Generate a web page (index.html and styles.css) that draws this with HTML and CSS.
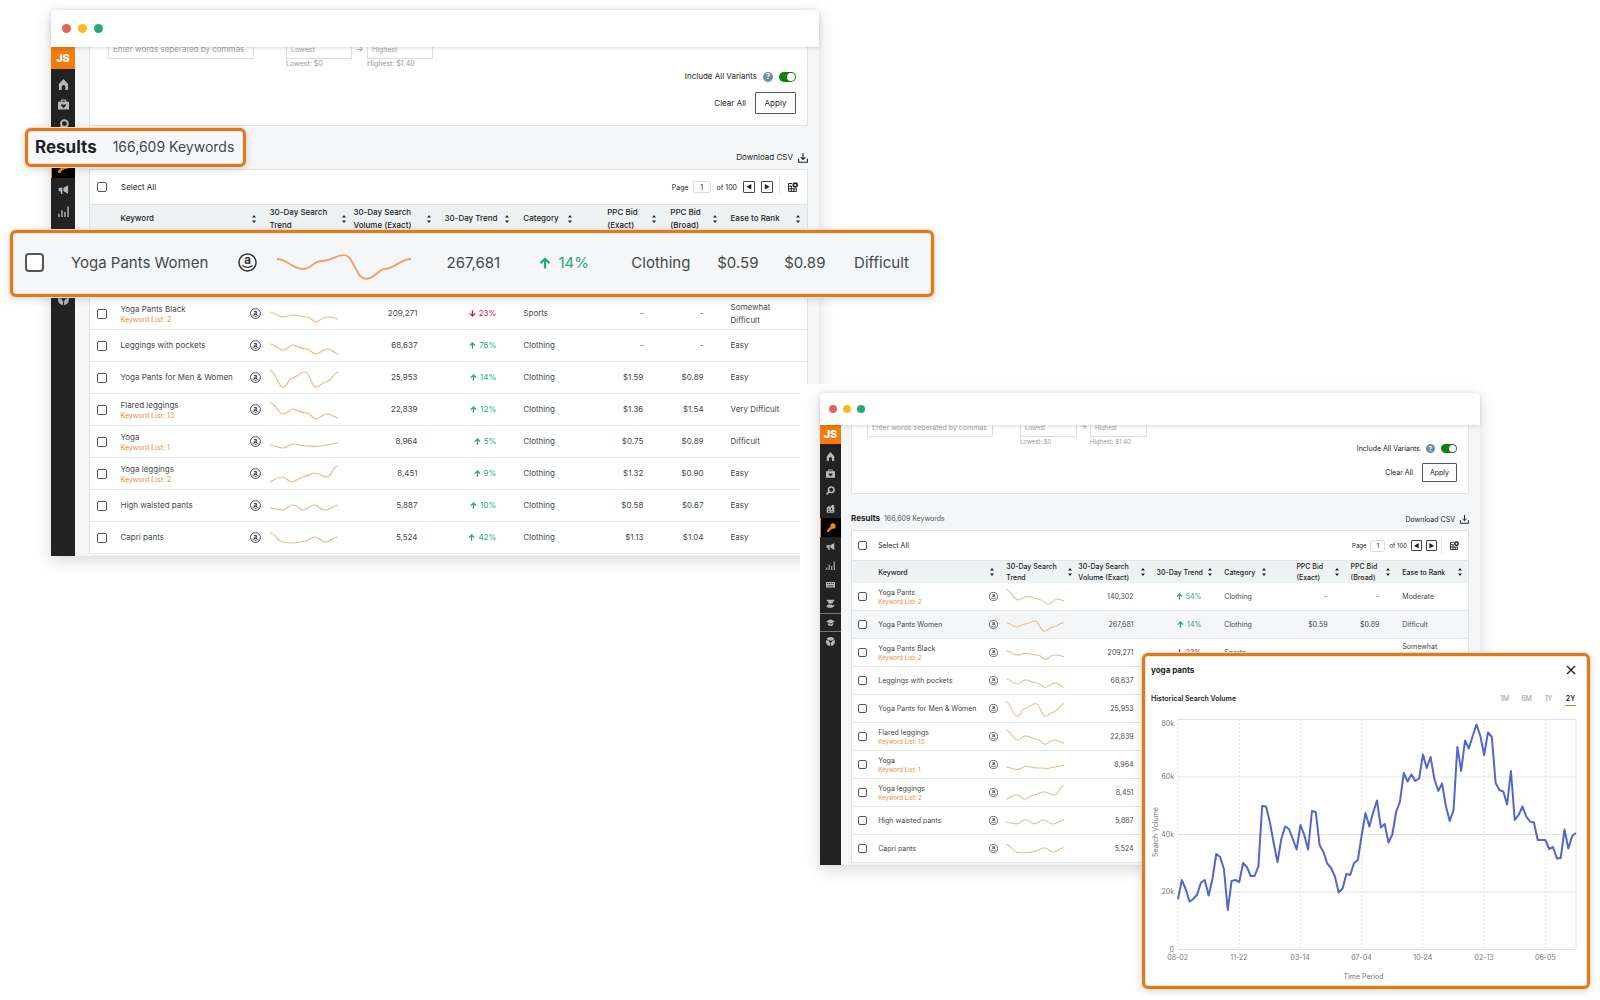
FILE: index.html
```html
<!DOCTYPE html>
<html lang="en">
<head>
<meta charset="utf-8">
<meta name="viewport" content="width=device-width, initial-scale=1">
<title>Keyword Scout</title>
<link rel="stylesheet" href="styles.css">
</head>
<body>
<svg class="defs" aria-hidden="true">
  <symbol id="home" viewBox="0 0 12 12"><path fill="currentColor" d="M6 0 11 5.500V11q0 1-1 1H8V8.500a2 2 0 0 0-4 0V12H2q-1 0-1-1V5.500z"/></symbol>
  <symbol id="case" viewBox="0 0 12 12"><path fill="currentColor" fill-rule="evenodd" d="M3 3V1.500Q3 .5 4 .5h4q1 0 1 1V3h3v8.500H0V3zM4.300 3h3.400V1.800H4.300zM3.500 5.500v1.800L6 10l2.500-2.700V5.500L6 6.300z"/></symbol>
  <symbol id="search" viewBox="0 0 12 12"><circle cx="7" cy="5" r="3.700" fill="none" stroke="currentColor" stroke-width="2.200"/><path d="M4.300 7.500.8 11.200" stroke="currentColor" stroke-width="2.200" fill="none"/></symbol>
  <symbol id="store" viewBox="0 0 12 12"><path fill="currentColor" fill-rule="evenodd" d="M1 4.500 4 2.500l1.500 1L9 1l2 1v9.500H1zM3 6v1.500h1.500V6zm3.500-1v3H8V5zM3 9v1.500h2V9zm4 .5v1h2v-1z"/></symbol>
  <symbol id="key" viewBox="0 0 12 12"><path fill="currentColor" d="M7.500.3a3.800 3.800 0 0 1 4 4.200C11.300 7 9.300 8 7 7.500L5.800 8.700H4.500V10H3.200v1.300L2.300 12H0V9.800L4.500 5C4 2.500 5 .6 7.500.3z"/></symbol>
  <symbol id="mega" viewBox="0 0 12 12"><path fill="currentColor" d="M1 4h4v3.800H4.500l.6 3H3.300l-.7-3H1q-1-1.900 0-3.800zM6 4 11 1.300v9.400L6 7.800z"/></symbol>
  <symbol id="bars" viewBox="0 0 12 12"><path d="M1 12V8.500M4.300 12V4.500M7.600 12V6.500M11 12V.5" stroke="currentColor" stroke-width="1.500"/></symbol>
  <symbol id="board" viewBox="0 0 12 12"><path fill="currentColor" fill-rule="evenodd" d="M0 2.500h12v7.500H0zM1.500 4v1.200H3V4zm2.700 0v1.200h1.500V4zM7 4v1.200h1.300V4zm2.500 0v1.200h1.200V4zM2 7.200v1h8v-1z"/></symbol>
  <symbol id="supply" viewBox="0 0 12 12"><path fill="currentColor" d="M1 1h10v2H9.500L8.500 6h-5L2.500 3H1zM1 9q2.500-3 5-1.500h2.500q1 1-1 1.500L11 8q1 1-2 3-4 1.800-8-.3z"/></symbol>
  <symbol id="cap" viewBox="0 0 12 12"><path fill="currentColor" d="M6 1.500 12 4.500 6 7.500 0 4.500zM2.500 6.800 6 8.600l3.500-1.800v2.500Q6 11.800 2.500 9.300z"/></symbol>
  <symbol id="wheel" viewBox="0 0 12 12"><circle cx="6" cy="6" r="6" fill="currentColor"/><path d="M3.300 4.500h5.400L6 9z" fill="#222"/><path d="M0 3.300 3.300 4.500M8.700 4.500 12 3.300M6 9v3" stroke="#222" stroke-width="1.200" fill="none"/></symbol>
  <symbol id="amazon" viewBox="0 0 20 20"><circle cx="10" cy="10" r="9" fill="none" stroke="currentColor" stroke-width="1.600"/><text class="amazon-a" x="10" y="12" text-anchor="middle">a</text><path d="M4.500 13.200q5.500 3.800 11 0" fill="none" stroke="currentColor" stroke-width="1.400"/></symbol>
  <symbol id="sort" viewBox="0 0 4 8"><path fill="currentColor" d="M2 0 4 2.600H0zM0 5.400h4L2 8z"/></symbol>
  <symbol id="up" viewBox="0 0 12 12"><path d="M6 11.500V2M1.500 6.300 6 1.700l4.500 4.600" fill="none" stroke="currentColor" stroke-width="2.200"/></symbol>
  <symbol id="down" viewBox="0 0 12 12"><path d="M6 .5V10M1.500 5.700 6 10.300l4.500-4.600" fill="none" stroke="currentColor" stroke-width="2.200"/></symbol>
  <symbol id="download" viewBox="0 0 12 12"><path d="M6 0v7.500M3.300 5 6 7.700 8.700 5M.7 7v4h10.600V7" fill="none" stroke="currentColor" stroke-width="1.300"/></symbol>
  <symbol id="columns" viewBox="0 0 12 12"><path d="M5 1.800H.7v9.500H10V8M.7 5H5M.7 8.200H10M4 5v6M7 8v3.300" fill="none" stroke="currentColor" stroke-width="1.200"/><circle cx="8.700" cy="3.700" r="2.300" fill="none" stroke="currentColor" stroke-width="2"/></symbol>
  <symbol id="s-pants" viewBox="0 0 68 20"><path d="M0 2C6 2 9 14 14 14S19 10 24 10S33 12 38 13S46 19 50 19S56 13 60 13S65 15 68 15"/></symbol>
  <symbol id="s-women" viewBox="0 0 68 20"><path d="M0 8C5 8 8 13 13 13S18 9 23 9S29 6 34 6S40 18 45 18S51 13 55 13S63 8 68 8"/></symbol>
  <symbol id="s-black" viewBox="0 0 68 20"><path d="M0 8C5 8 8 13 13 13S18 11 23 11S32 13 37 13S42 18 46 18S51 13 57 13S64 14 68 15"/></symbol>
  <symbol id="s-pockets" viewBox="0 0 68 20"><path d="M0 8C5 8 8 14 13 14S19 9 23 9S31 13 36 13S42 18 46 18S52 13 57 13S64 17 68 18"/></symbol>
  <symbol id="s-men" viewBox="0 0 68 20"><path d="M0 2C6 4 8 19 13 19S18 10 22 10S30 4 35 4S41 19 46 19S52 14 56 14S64 5 68 4"/></symbol>
  <symbol id="s-flared" viewBox="0 0 68 20"><path d="M0 3C6 3 8 14 13 14S19 9 23 9S31 13 36 13S42 19 46 19S52 14 57 14S64 17 68 18"/></symbol>
  <symbol id="s-yoga" viewBox="0 0 68 20"><path d="M0 13C5 13 8 16 13 16S19 12 23 12S31 14 36 14S46 15 52 14S64 12 68 11"/></symbol>
  <symbol id="s-leggings" viewBox="0 0 68 20"><path d="M0 18C5 16 7 13 12 13S18 18 22 18S28 14 33 13S41 9 45 9S52 13 57 13S62 2 68 2"/></symbol>
  <symbol id="s-high" viewBox="0 0 68 20"><path d="M0 12C5 12 7 14 12 14S18 9 23 9S29 14 33 14S40 9 44 9S50 14 55 14S63 10 68 9"/></symbol>
  <symbol id="s-capri" viewBox="0 0 68 20"><path d="M0 5C5 5 7 13 12 14S19 15 23 15S30 14 35 13S41 9 45 9S51 14 56 14S63 9 68 9"/></symbol>
</svg>

<main class="stage">

  <section class="window window-large" aria-label="Keyword results">
    <header class="titlebar"><i class="dot red"></i><i class="dot yellow"></i><i class="dot green"></i></header>
    <div class="app">
      <nav class="sidebar" aria-label="Tools">
        <a class="logo" href="#">JS</a>
        <a class="tight" href="#" aria-label="Home"><svg><use href="#home"/></svg></a>
        <a class="tight" href="#" aria-label="Products"><svg><use href="#case"/></svg></a>
        <a class="tight" href="#" aria-label="Search"><svg><use href="#search"/></svg></a>
        <a href="#" aria-label="Store"><svg><use href="#store"/></svg></a>
        <a class="active" href="#" aria-label="Keywords"><svg><use href="#key"/></svg></a>
        <a href="#" aria-label="Marketing"><svg><use href="#mega"/></svg></a>
        <a href="#" aria-label="Analytics"><svg><use href="#bars"/></svg></a>
        <a href="#" aria-label="Inventory"><svg><use href="#board"/></svg></a>
        <a href="#" aria-label="Suppliers"><svg><use href="#supply"/></svg></a>
        <a class="ruled" href="#" aria-label="Academy"><svg><use href="#cap"/></svg></a>
        <a href="#" aria-label="Extension"><svg><use href="#wheel"/></svg></a>
      </nav>
      <div class="content">
        <form class="filters">
          <div class="fields">
            <input class="words" type="text" placeholder="Enter words seperated by commas" aria-label="Words">
            <label class="bound"><input type="text" placeholder="Lowest">Lowest: $0</label>
            <span class="to">→</span>
            <label class="bound"><input type="text" placeholder="Highest">Highest: $1.40</label>
          </div>
          <div class="actions">
            <label class="variants">Include All Variants <span class="help">?</span><input class="toggle" type="checkbox" checked></label>
            <div class="buttons"><button class="clear" type="reset">Clear All</button><button class="apply" type="button">Apply</button></div>
          </div>
        </form>
        <div class="summary">
          <a class="csv" href="#">Download CSV <svg><use href="#download"/></svg></a>
        </div>
        <div class="card">
          <div class="toolbar">
            <label class="select-all"><input class="box" type="checkbox">Select All</label>
            <div class="pager">
              <label>Page <input type="text" value="1"></label><span class="of">of 100</span>
              <button type="button" aria-label="Previous page">◀</button><button type="button" aria-label="Next page">▶</button>
              <a class="cols" href="#" aria-label="Columns"><svg><use href="#columns"/></svg></a>
            </div>
          </div>
          <table>
            <colgroup><col class="c-check"><col class="c-key"><col class="c-site"><col class="c-spark"><col class="c-vol"><col class="c-trend"><col class="c-cat"><col class="c-exact"><col class="c-broad"><col></colgroup>
            <thead><tr>
              <td></td>
              <th colspan="2"><div class="head">Keyword<svg><use href="#sort"/></svg></div></th>
              <th><div class="head near">30-Day Search<br>Trend<svg><use href="#sort"/></svg></div></th>
              <th><div class="head">30-Day Search<br>Volume (Exact)<svg><use href="#sort"/></svg></div></th>
              <th><div class="head">30-Day Trend<svg><use href="#sort"/></svg></div></th>
              <th><div class="head far">Category<svg><use href="#sort"/></svg></div></th>
              <th><div class="head">PPC Bid<br>(Exact)<svg><use href="#sort"/></svg></div></th>
              <th><div class="head">PPC Bid<br>(Broad)<svg><use href="#sort"/></svg></div></th>
              <th><div class="head near">Ease to Rank<svg><use href="#sort"/></svg></div></th>
            </tr></thead>
            <tbody>
              <tr class="covered"><td colspan="10"></td></tr>
              <tr><td><input class="box" type="checkbox" aria-label="Yoga Pants Black"></td><td>Yoga Pants Black<a class="list" href="#">Keyword List: 2</a></td><td><svg class="site"><use href="#amazon"/></svg></td><td><svg class="spark"><use href="#s-black"/></svg></td><td class="num">209,271</td><td class="num down"><svg><use href="#down"/></svg>23%</td><td>Sports</td><td class="num">-</td><td class="num">-</td><td>Somewhat<br>Difficult</td></tr>
              <tr><td><input class="box" type="checkbox" aria-label="Leggings with pockets"></td><td>Leggings with pockets</td><td><svg class="site"><use href="#amazon"/></svg></td><td><svg class="spark"><use href="#s-pockets"/></svg></td><td class="num">68,637</td><td class="num up"><svg><use href="#up"/></svg>76%</td><td>Clothing</td><td class="num">-</td><td class="num">-</td><td>Easy</td></tr>
              <tr><td><input class="box" type="checkbox" aria-label="Yoga Pants for Men and Women"></td><td>Yoga Pants for Men &amp; Women</td><td><svg class="site"><use href="#amazon"/></svg></td><td><svg class="spark"><use href="#s-men"/></svg></td><td class="num">25,953</td><td class="num up"><svg><use href="#up"/></svg>14%</td><td>Clothing</td><td class="num">$1.59</td><td class="num">$0.89</td><td>Easy</td></tr>
              <tr><td><input class="box" type="checkbox" aria-label="Flared leggings"></td><td>Flared leggings<a class="list" href="#">Keyword List: 13</a></td><td><svg class="site"><use href="#amazon"/></svg></td><td><svg class="spark"><use href="#s-flared"/></svg></td><td class="num">22,839</td><td class="num up"><svg><use href="#up"/></svg>12%</td><td>Clothing</td><td class="num">$1.36</td><td class="num">$1.54</td><td>Very Difficult</td></tr>
              <tr><td><input class="box" type="checkbox" aria-label="Yoga"></td><td>Yoga<a class="list" href="#">Keyword List: 1</a></td><td><svg class="site"><use href="#amazon"/></svg></td><td><svg class="spark"><use href="#s-yoga"/></svg></td><td class="num">8,964</td><td class="num up"><svg><use href="#up"/></svg>5%</td><td>Clothing</td><td class="num">$0.75</td><td class="num">$0.89</td><td>Difficult</td></tr>
              <tr><td><input class="box" type="checkbox" aria-label="Yoga leggings"></td><td>Yoga leggings<a class="list" href="#">Keyword List: 2</a></td><td><svg class="site"><use href="#amazon"/></svg></td><td><svg class="spark"><use href="#s-leggings"/></svg></td><td class="num">8,451</td><td class="num up"><svg><use href="#up"/></svg>9%</td><td>Clothing</td><td class="num">$1.32</td><td class="num">$0.90</td><td>Easy</td></tr>
              <tr><td><input class="box" type="checkbox" aria-label="High waisted pants"></td><td>High waisted pants</td><td><svg class="site"><use href="#amazon"/></svg></td><td><svg class="spark"><use href="#s-high"/></svg></td><td class="num">5,887</td><td class="num up"><svg><use href="#up"/></svg>10%</td><td>Clothing</td><td class="num">$0.58</td><td class="num">$0.67</td><td>Easy</td></tr>
              <tr><td><input class="box" type="checkbox" aria-label="Capri pants"></td><td>Capri pants</td><td><svg class="site"><use href="#amazon"/></svg></td><td><svg class="spark"><use href="#s-capri"/></svg></td><td class="num">5,524</td><td class="num up"><svg><use href="#up"/></svg>42%</td><td>Clothing</td><td class="num">$1.13</td><td class="num">$1.04</td><td>Easy</td></tr>
            </tbody>
          </table>
        </div>
      </div>
    </div>
  </section>

  <div class="callout results"><h2>Results</h2><span>166,609 Keywords</span></div>

  <div class="callout highlight">
    <input class="box" type="checkbox" aria-label="Yoga Pants Women">
    <span>Yoga Pants Women</span>
    <svg class="site"><use href="#amazon"/></svg>
    <svg class="spark"><use href="#s-women"/></svg>
    <span>267,681</span>
    <span class="up"><svg><use href="#up"/></svg>14%</span>
    <span>Clothing</span>
    <span>$0.59</span>
    <span>$0.89</span>
    <span>Difficult</span>
  </div>

  <div class="inset">
    <section class="window window-small" aria-label="Keyword results with history">
      <header class="titlebar"><i class="dot red"></i><i class="dot yellow"></i><i class="dot green"></i></header>
      <div class="app">
        <nav class="sidebar" aria-label="Tools">
          <a class="logo" href="#">JS</a>
          <a class="tight" href="#" aria-label="Home"><svg><use href="#home"/></svg></a>
          <a class="tight" href="#" aria-label="Products"><svg><use href="#case"/></svg></a>
          <a class="tight" href="#" aria-label="Search"><svg><use href="#search"/></svg></a>
          <a href="#" aria-label="Store"><svg><use href="#store"/></svg></a>
          <a class="active" href="#" aria-label="Keywords"><svg><use href="#key"/></svg></a>
          <a href="#" aria-label="Marketing"><svg><use href="#mega"/></svg></a>
          <a href="#" aria-label="Analytics"><svg><use href="#bars"/></svg></a>
          <a href="#" aria-label="Inventory"><svg><use href="#board"/></svg></a>
          <a href="#" aria-label="Suppliers"><svg><use href="#supply"/></svg></a>
          <a class="ruled" href="#" aria-label="Academy"><svg><use href="#cap"/></svg></a>
          <a href="#" aria-label="Extension"><svg><use href="#wheel"/></svg></a>
        </nav>
        <div class="content">
          <form class="filters">
            <div class="fields">
              <input class="words" type="text" placeholder="Enter words seperated by commas" aria-label="Words">
              <label class="bound"><input type="text" placeholder="Lowest">Lowest: $0</label>
              <span class="to">→</span>
              <label class="bound"><input type="text" placeholder="Highest">Highest: $1.40</label>
            </div>
            <div class="actions">
              <label class="variants">Include All Variants <span class="help">?</span><input class="toggle" type="checkbox" checked></label>
              <div class="buttons"><button class="clear" type="reset">Clear All</button><button class="apply" type="button">Apply</button></div>
            </div>
          </form>
          <div class="summary">
            <p class="count"><strong>Results</strong> 166,609 Keywords</p>
            <a class="csv" href="#">Download CSV <svg><use href="#download"/></svg></a>
          </div>
          <div class="card">
            <div class="toolbar">
              <label class="select-all"><input class="box" type="checkbox">Select All</label>
              <div class="pager">
                <label>Page <input type="text" value="1"></label><span class="of">of 100</span>
                <button type="button" aria-label="Previous page">◀</button><button type="button" aria-label="Next page">▶</button>
                <a class="cols" href="#" aria-label="Columns"><svg><use href="#columns"/></svg></a>
              </div>
            </div>
            <table>
              <colgroup><col class="c-check"><col class="c-key"><col class="c-site"><col class="c-spark"><col class="c-vol"><col class="c-trend"><col class="c-cat"><col class="c-exact"><col class="c-broad"><col></colgroup>
              <thead><tr>
                <td></td>
                <th colspan="2"><div class="head">Keyword<svg><use href="#sort"/></svg></div></th>
                <th><div class="head near">30-Day Search<br>Trend<svg><use href="#sort"/></svg></div></th>
                <th><div class="head">30-Day Search<br>Volume (Exact)<svg><use href="#sort"/></svg></div></th>
                <th><div class="head">30-Day Trend<svg><use href="#sort"/></svg></div></th>
                <th><div class="head far">Category<svg><use href="#sort"/></svg></div></th>
                <th><div class="head">PPC Bid<br>(Exact)<svg><use href="#sort"/></svg></div></th>
                <th><div class="head">PPC Bid<br>(Broad)<svg><use href="#sort"/></svg></div></th>
                <th><div class="head near">Ease to Rank<svg><use href="#sort"/></svg></div></th>
              </tr></thead>
              <tbody>
                <tr><td><input class="box" type="checkbox" aria-label="Yoga Pants"></td><td>Yoga Pants<a class="list" href="#">Keyword List: 2</a></td><td><svg class="site"><use href="#amazon"/></svg></td><td><svg class="spark"><use href="#s-pants"/></svg></td><td class="num">140,302</td><td class="num up"><svg><use href="#up"/></svg>54%</td><td>Clothing</td><td class="num">-</td><td class="num">-</td><td>Moderate</td></tr>
                <tr class="tinted"><td><input class="box" type="checkbox" aria-label="Yoga Pants Women"></td><td>Yoga Pants Women</td><td><svg class="site"><use href="#amazon"/></svg></td><td><svg class="spark"><use href="#s-women"/></svg></td><td class="num">267,681</td><td class="num up"><svg><use href="#up"/></svg>14%</td><td>Clothing</td><td class="num">$0.59</td><td class="num">$0.89</td><td>Difficult</td></tr>
                <tr><td><input class="box" type="checkbox" aria-label="Yoga Pants Black"></td><td>Yoga Pants Black<a class="list" href="#">Keyword List: 2</a></td><td><svg class="site"><use href="#amazon"/></svg></td><td><svg class="spark"><use href="#s-black"/></svg></td><td class="num">209,271</td><td class="num down"><svg><use href="#down"/></svg>23%</td><td>Sports</td><td></td><td></td><td class="cut">Somewhat</td></tr>
                <tr><td><input class="box" type="checkbox" aria-label="Leggings with pockets"></td><td>Leggings with pockets</td><td><svg class="site"><use href="#amazon"/></svg></td><td><svg class="spark"><use href="#s-pockets"/></svg></td><td class="num">68,637</td><td colspan="5"></td></tr>
                <tr><td><input class="box" type="checkbox" aria-label="Yoga Pants for Men and Women"></td><td>Yoga Pants for Men &amp; Women</td><td><svg class="site"><use href="#amazon"/></svg></td><td><svg class="spark"><use href="#s-men"/></svg></td><td class="num">25,953</td><td colspan="5"></td></tr>
                <tr><td><input class="box" type="checkbox" aria-label="Flared leggings"></td><td>Flared leggings<a class="list" href="#">Keyword List: 13</a></td><td><svg class="site"><use href="#amazon"/></svg></td><td><svg class="spark"><use href="#s-flared"/></svg></td><td class="num">22,839</td><td colspan="5"></td></tr>
                <tr><td><input class="box" type="checkbox" aria-label="Yoga"></td><td>Yoga<a class="list" href="#">Keyword List: 1</a></td><td><svg class="site"><use href="#amazon"/></svg></td><td><svg class="spark"><use href="#s-yoga"/></svg></td><td class="num">8,964</td><td colspan="5"></td></tr>
                <tr><td><input class="box" type="checkbox" aria-label="Yoga leggings"></td><td>Yoga leggings<a class="list" href="#">Keyword List: 2</a></td><td><svg class="site"><use href="#amazon"/></svg></td><td><svg class="spark"><use href="#s-leggings"/></svg></td><td class="num">8,451</td><td colspan="5"></td></tr>
                <tr><td><input class="box" type="checkbox" aria-label="High waisted pants"></td><td>High waisted pants</td><td><svg class="site"><use href="#amazon"/></svg></td><td><svg class="spark"><use href="#s-high"/></svg></td><td class="num">5,887</td><td colspan="5"></td></tr>
                <tr><td><input class="box" type="checkbox" aria-label="Capri pants"></td><td>Capri pants</td><td><svg class="site"><use href="#amazon"/></svg></td><td><svg class="spark"><use href="#s-capri"/></svg></td><td class="num">5,524</td><td colspan="5"></td></tr>
              </tbody>
            </table>
          </div>
        </div>
      </div>
    </section>
  </div>

  <section class="callout history" aria-label="Historical search volume">
    <header class="history-top"><h2>yoga pants</h2><button type="button" aria-label="Close"><svg viewBox="0 0 10 10"><path d="M1 1l8 8M9 1 1 9" stroke="currentColor" stroke-width="1.400"/></svg></button></header>
    <div class="history-bar">
      <h3>Historical Search Volume</h3>
      <div class="ranges"><button type="button">1M</button><button type="button">6M</button><button type="button">1Y</button><button class="on" type="button">2Y</button></div>
    </div>
    <div class="chart">
      <span class="y-title">Search Volume</span>
      <div class="y-axis"><span>80k</span><span>60k</span><span>40k</span><span>20k</span><span>0</span></div>
      <svg class="plot" viewBox="0 0 104 231" preserveAspectRatio="none" role="img" aria-label="Search volume over two years">
        <path class="grid" d="M0 .5H104M0 58H104M0 115.500H104M0 173H104M0 230.500H104M104 0V231"/>
        <path class="grid dashed" d="M0 0V231M16 0V231M32 0V231M48 0V231M64 0V231M80 0V231M96 0V231"/>
        <polyline class="series" points="0,180 1,161 2,170 3,182.500 4,180 5,175.500 6,163.500 7,161 8,176.500 9,160 10,135 11,138 12,150 13,191 14,162 15,161 16,163 17,144 18,148 19,157 20,157 21,147.500 22,87 23,87.500 24,103 25,124 26,143 27,120 28,107.500 29,110 30,120 31,130.500 32,106 33,116 34,130.500 35,92 36,93 37,126 38,133 39,144.500 40,149 41,157.500 42,173.500 43,169.500 44,155 45,156 46,144 47,141 48,116 49,94 50,107.500 51,93.500 52,81.500 53,108.500 54,105 55,123.500 56,115.500 57,93 58,82.500 59,54 60,62.500 61,55.500 62,62 63,59.500 64,35.500 65,49 66,38 67,60 68,72 69,64.500 70,87 71,102 72,91 73,28 74,52 75,21.500 76,29.500 77,17 78,5.500 79,17 80,36 81,13.500 82,18 83,64 84,71 85,72.500 86,85.500 87,52 88,101 89,96 90,87.500 91,97.500 92,102.500 93,103.500 94,121 95,121 96,121 97,130 98,128 99,139.500 100,139 101,110.500 102,129.500 103,117 104,114"/>
      </svg>
      <div class="x-axis"><span>08-02</span><span>11-22</span><span>03-14</span><span>07-04</span><span>10-24</span><span>02-13</span><span>06-05</span></div>
      <span class="x-title">Time Period</span>
    </div>
  </section>
</main>
</body>
</html>
```
FILE: styles.css
```css
* { box-sizing: border-box; }
body { margin: 0; background: #fff; color: #44484b; font-family: Inter, "Liberation Sans", sans-serif; }
h2, h3, p { margin: 0; }
a { color: inherit; text-decoration: none; }
input, button { font: inherit; color: inherit; margin: 0; padding: 0; border: 0; background: none; }
svg { display: block; overflow: visible; }
.defs { position: absolute; width: 0; height: 0; }
.amazon-a { font: bold 12px Inter, sans-serif; fill: currentColor; }

.stage { position: relative; min-height: 1000px; overflow: hidden; }

/* Windows: the two sizes share all rules and differ in these values */
.window-large {
  --text: 8px; --small: 7px; --line: 13px; --title-h: 37px; --dot: 9px; --dot-gap: 7px; --title-pad: 11px;
  --side: 24px; --logo-h: 22px; --nav: 22px; --nav-tight: 20px; --nav-gap: 5px; --nav-icon: 11px;
  --gutter: 14px; --filter-h: 79px; --summary-h: 43px; --toolbar-h: 35px; --head-h: 28px; --row-h: 32px;
  --box: 10px; --spark-w: 68px; --spark-h: 20px; --site: 11px; --pad: 14px; --num-pad: 27px; --near: 7px; --far: 35px;
  --words: 146px; --bound: 66px; --apply-w: 41px; --apply-h: 22px; --field-pad: 18px; --field-gap: 32px; --to: 15px;
  --edge: 7px; --select-gap: 14px; --page: 18px; --page-gap: 6px;
}
.window-small {
  --text: 7px; --small: 6px; --line: 11px; --title-h: 32px; --dot: 8px; --dot-gap: 6px; --title-pad: 9px;
  --side: 21px; --logo-h: 19px; --nav: 19px; --nav-tight: 17px; --nav-gap: 4px; --nav-icon: 9px;
  --gutter: 10px; --filter-h: 69px; --summary-h: 36px; --toolbar-h: 30px; --head-h: 23px; --row-h: 28px;
  --box: 9px; --spark-w: 58px; --spark-h: 17px; --site: 9px; --pad: 12px; --num-pad: 23px; --near: 6px; --far: 30px;
  --words: 126px; --bound: 57px; --apply-w: 35px; --apply-h: 19px; --field-pad: 15px; --field-gap: 27px; --to: 13px;
  --edge: 6px; --select-gap: 11px; --page: 15px; --page-gap: 4px;
}
.window { background: #f4f6f8; border-radius: 4px 4px 0 0; box-shadow: 0 4px 16px rgba(0, 0, 0, .16); font-size: var(--text); line-height: var(--line); }
.window-large { position: absolute; left: 51px; top: 10px; width: 48vw; }
.inset { position: absolute; left: 50%; right: 0; top: 384px; bottom: 0; padding: 9px 0 0 20px; background: #fff; }
.window-small { width: 41.250vw; }

.titlebar { position: relative; display: flex; align-items: center; gap: var(--dot-gap); height: var(--title-h); padding-left: var(--title-pad); background: #fff; border-radius: 4px 4px 0 0; box-shadow: 0 1px 4px rgba(0, 0, 0, .15); }
.dot { width: var(--dot); height: var(--dot); border-radius: 50%; }
.red { background: #e2645f; }
.yellow { background: #f5bd1f; }
.green { background: #27a87c; }

.app { display: flex; }
.sidebar { display: flex; flex-direction: column; flex: none; width: var(--side); background: #222; color: #b4b8ba; }
.sidebar a { display: flex; align-items: center; justify-content: center; height: var(--nav); }
.sidebar svg { width: var(--nav-icon); height: var(--nav-icon); }
.sidebar .logo { height: var(--logo-h); margin-bottom: var(--nav-gap); background: #f57c0a; color: #fff; font-size: 11px; font-weight: 800; }
.sidebar .tight { height: var(--nav-tight); }
.sidebar .active { background: #000; color: #f58220; border-left: 1px solid #f58220; }
.sidebar .ruled { border-top: 1px solid #777; border-bottom: 1px solid #777; }

.content { flex: 1; min-width: 0; padding: 0 11px 2px var(--gutter); overflow: hidden; }
.filters { display: flex; justify-content: space-between; height: var(--filter-h); background: #fff; border: 1px solid #e0e4e6; border-top: 0; }
.fields { display: flex; align-items: flex-start; margin-top: -8px; padding-left: var(--field-pad); color: #999; }
.fields input { height: 20px; padding: 0 4px; border: 1px solid #dcdfe1; }
.fields input::placeholder { color: #a4a4a4; opacity: 1; }
.words { width: var(--words); margin-right: var(--field-gap); }
.bound { display: flex; flex-direction: column; width: var(--bound); font-size: var(--small); line-height: 9px; white-space: nowrap; }
.bound input { width: 100%; }
.to { width: var(--to); line-height: 20px; text-align: center; }
.actions { display: flex; flex-direction: column; align-items: flex-end; justify-content: flex-end; gap: 9px; padding: 0 11px 11px 0; color: #222; }
.variants { display: flex; align-items: center; gap: 6px; }
.help { width: var(--box); height: var(--box); border-radius: 50%; background: #6f8fa0; color: #fff; font-size: var(--small); line-height: var(--box); text-align: center; font-weight: 700; }
.toggle { appearance: none; display: flex; justify-content: flex-end; width: calc(var(--box) + 7px); height: var(--box); padding: 1px; border-radius: 5px; background: #128012; }
.toggle::before { content: ""; height: 100%; aspect-ratio: 1; border-radius: 50%; background: #fff; }
.buttons { display: flex; align-items: center; gap: 9px; }
.apply { width: var(--apply-w); height: var(--apply-h); border: 1px solid #555; border-radius: 1px; }

.summary { display: flex; align-items: flex-end; height: var(--summary-h); padding-bottom: 5px; color: #222; }
.count { color: #555; padding-bottom: 1px; }
.count strong { margin-right: 2px; font-size: 8px; color: #222; }
.csv { display: flex; align-items: center; gap: 5px; margin-left: auto; }
.csv svg, .cols svg { width: var(--box); height: var(--box); }

.card { background: #fff; border: 1px solid #dfe3e6; border-width: 1px 1px 0; }
.toolbar { display: flex; align-items: center; justify-content: space-between; height: calc(var(--toolbar-h) - 1px); padding: 0 9px 0 var(--edge); color: #222; }
.select-all { display: flex; align-items: center; gap: var(--select-gap); }
.pager { display: flex; align-items: center; gap: var(--page-gap); font-size: var(--small); }
.pager label { display: flex; align-items: center; gap: 4px; }
.pager input { width: var(--page); height: 12px; border: 1px solid #dcdfe1; border-radius: 2px; text-align: center; }
.pager button { width: calc(var(--box) + 2px); height: calc(var(--box) + 2px); border: 1px solid #444; border-radius: 1px; font-size: 6px; line-height: 8px; }
.cols { padding: 4px 0 4px 8px; border-left: 1px solid #e4e7e9; }
.box { appearance: none; display: block; flex: none; width: var(--box); height: var(--box); border: 1px solid #555; border-radius: 2px; background: #fff; }

table { width: 100%; table-layout: fixed; border-spacing: 0; }
.c-check { width: 4.250%; }
.c-key { width: 18%; }
.c-site { width: 2.800%; }
.c-spark { width: 11.700%; }
.c-vol { width: 12.700%; }
.c-trend { width: 11%; }
.c-cat { width: 11.700%; }
.c-exact { width: 8.800%; }
.c-broad { width: 8.400%; }
th, td { padding: 0; text-align: left; white-space: nowrap; font-weight: 400; }
thead tr { height: var(--head-h); background: #eef2f3; color: #222; }
thead td, thead th { border-top: 1px solid #e0e5e7; }
.head { position: relative; padding-right: var(--pad); font-weight: 500; }
.head svg { position: absolute; right: var(--pad); top: 50%; width: 4px; height: 8px; margin-top: -4px; }
.head.near svg { right: var(--near); }
.head.far svg { right: var(--far); }
tbody tr { height: var(--row-h); }
tbody td { border-bottom: 1px solid #e3e7ea; }
tbody td:first-child { padding-left: var(--edge); }
tbody .covered { height: 66px; }
.tinted { background: #f4f6f8; }
.list { display: block; font-size: var(--small); line-height: 8px; color: #e8913a; }
.site { width: var(--site); height: var(--site); color: #333; }
.spark { width: var(--spark-w); height: var(--spark-h); fill: none; stroke: #ecb98b; stroke-width: 1.200px; }
.num { padding-right: var(--num-pad); text-align: right; }
.num svg { display: inline-block; width: 7px; height: 7px; margin-right: 3px; vertical-align: -1px; }
.up { color: #27a87c; }
.down { color: #d0213f; }
.cut { padding-bottom: 12px; }

/* Enlarged details laid over the windows */
.callout { position: absolute; border: 3px solid #d97b24; border-radius: 6px; background: #f6f8f9; box-shadow: 0 0 0 1px #f9dcbc, 0 2px 8px rgba(0, 0, 0, .16), inset 0 0 0 1px #fbe3c8; }
.results { left: 25px; top: 128px; display: flex; align-items: center; gap: 16px; height: 39px; padding: 0 9px 2px 7px; font-size: 14px; white-space: nowrap; }
.results h2 { font-size: 17px; font-weight: 700; color: #222; }
.highlight { --box: 19px; left: 10px; top: 230px; width: 57.750vw; height: 67px; padding: 0 0 2px 12px; display: grid; grid-template-columns: 46fr 167fr 39fr 170fr 93fr 92fr 86fr 67fr 70fr 77fr; align-items: center; font-size: 15px; white-space: nowrap; background: #f4f6f8; }
.highlight .box { border-radius: 4px; border-width: 2px; }
.highlight .site { width: 19px; height: 19px; }
.highlight .spark { width: 134px; height: 40px; stroke-width: 1px; stroke: #eaa470; }
.highlight .up { display: flex; align-items: center; gap: 7px; }
.highlight .up svg { width: 12px; height: 12px; }

.history { right: 10px; top: 653px; width: 28vw; height: 336px; padding: 4px 11px 0 6px; background: #fff; color: #222; font-size: 8px; line-height: 10px; }
.history-top, .history-bar { display: flex; align-items: center; justify-content: space-between; }
.history-top { height: 20px; }
.history-bar { height: 20px; margin-top: 9px; }
.history h2 { font-size: 8px; font-weight: 700; }
.history h3 { font-size: 7px; font-weight: 600; }
.history-top svg { width: 10px; height: 10px; }
.ranges { display: flex; gap: 11px; font-size: 7px; color: #999; }
.ranges button { width: 11px; height: 14px; border-bottom: 1px solid transparent; }
.ranges .on { color: #222; font-weight: 600; border-color: #d97b24; }
.chart { display: grid; grid-template-columns: 9px 18px 1fr; grid-template-rows: 231px 14px auto; margin-top: 10px; font-size: 7px; color: #777; }
.y-title { writing-mode: vertical-rl; transform: rotate(180deg); text-align: center; padding-top: 4px; }
.y-axis { display: grid; grid-template-rows: repeat(4, 1fr) 10px; margin: -5px 0; padding-right: 4px; text-align: right; }
.y-axis span:first-child { padding-top: 5px; }
.plot { width: 100%; height: 231px; }
.grid { fill: none; stroke: #e3e3e3; stroke-width: 1px; vector-effect: non-scaling-stroke; }
.dashed { stroke-dasharray: 2 2; }
.series { fill: none; stroke: #5566c9; stroke-width: 2px; stroke-linejoin: round; vector-effect: non-scaling-stroke; }
.x-axis { grid-column: 3; display: grid; grid-template-columns: repeat(7, 1fr); margin-left: -31px; padding-top: 3px; text-align: center; }
.x-title { grid-column: 1 / -1; padding: 8px 0 0; text-align: center; }
```
